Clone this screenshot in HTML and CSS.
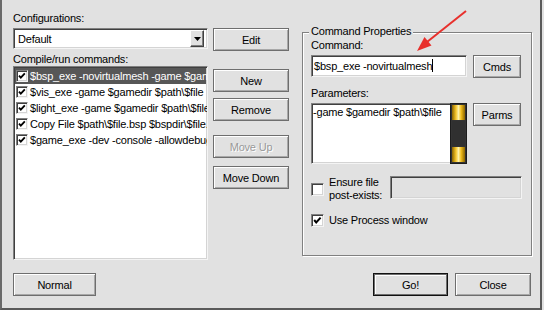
FILE: index.html
```html
<!DOCTYPE html>
<html lang="en">
<head>
    <meta charset="UTF-8">
    <title>Run Map</title>
    <link rel="stylesheet" href="styles.css">
</head>
<body>
    <div class="window">
        <div class="main">
            <div class="left">
                <div class="label">Configurations:</div>
                <div class="combo">
                    <span class="combo-text">Default</span>
                    <span class="combo-btn">
                        <svg width="7" height="4" viewBox="0 0 7 4"><polygon points="0,0 7,0 3.5,4" fill="#000"/></svg>
                    </span>
                </div>
                <div class="label label-list">Compile/run commands:</div>
                <ul class="list">
                    <li class="item selected"><span class="check sm on"></span>$bsp_exe -novirtualmesh -game $gamedir $path\$file</li>
                    <li class="item"><span class="check sm on"></span>$vis_exe -game $gamedir $path\$file</li>
                    <li class="item"><span class="check sm on"></span>$light_exe -game $gamedir $path\$file</li>
                    <li class="item"><span class="check sm on"></span>Copy File $path\$file.bsp $bspdir\$file.bsp</li>
                    <li class="item"><span class="check sm on"></span>$game_exe -dev -console -allowdebug</li>
                </ul>
            </div>

            <div class="buttons">
                <button class="btn">Edit</button>
                <button class="btn btn-new">New</button>
                <button class="btn btn-remove">Remove</button>
                <button class="btn btn-up" disabled>Move Up</button>
                <button class="btn btn-down">Move Down</button>
            </div>

            <div class="group">
                <span class="legend">Command Properties</span>
                <div class="label">Command:</div>
                <div class="field-row">
                    <div class="input">$bsp_exe -novirtualmesh<span class="caret"></span></div>
                    <button class="btn btn-small">Cmds</button>
                </div>
                <div class="label label-params">Parameters:</div>
                <div class="field-row">
                    <div class="textarea">
                        <div class="textarea-text">-game $gamedir $path\$file</div>
                        <div class="scroll">
                            <div class="thumb"></div>
                            <div class="track"></div>
                            <div class="thumb"></div>
                        </div>
                    </div>
                    <button class="btn btn-small">Parms</button>
                </div>
                <div class="check-row">
                    <span class="check"></span>
                    <div class="check-label">Ensure file<br>post-exists:</div>
                    <div class="input input-disabled"></div>
                </div>
                <div class="option-row">
                    <span class="check on"></span>
                    <div class="check-label">Use Process window</div>
                </div>
            </div>
        </div>

        <div class="footer">
            <button class="btn btn-normal">Normal</button>
            <button class="btn btn-go">Go!</button>
            <button class="btn btn-close">Close</button>
        </div>

        <svg class="arrow" width="544" height="310" viewBox="0 0 544 310">
            <line x1="466" y1="11" x2="427" y2="42" stroke="#e8302c" stroke-width="2"/>
            <polygon points="417,51 431.5,45.5 424.5,37" fill="#e8302c"/>
        </svg>
    </div>
</body>
</html>
```

FILE: styles.css
```css
body {
    margin: 0;
    background-color: #e1e1e1;
    font-family: "Liberation Sans", Arial, sans-serif;
    font-size: 11px;
    letter-spacing: -0.2px;
    color: #000;
}
.window {
    position: relative;
    width: 542px;
    height: 310px;
    box-sizing: border-box;
    border-left: 2px solid #6a6a6a;
    border-right: 2px solid #5a5a5a;
    border-bottom: 2px solid #5a5a5a;
    padding: 12px 8px 0 11px;
    display: flex;
    flex-direction: column;
}
.main {
    display: flex;
    align-items: flex-start;
}
.left {
    width: 195px;
}
.label {
    height: 13px;
    line-height: 13px;
    white-space: nowrap;
}
.label-list {
    margin-top: 4px;
}
.label-params {
    margin-top: 9px;
}

/* sunken boxes */
.combo,
.list,
.input,
.textarea {
    box-sizing: border-box;
    background-color: #fff;
    border: 1px solid;
    border-color: #808080 #f4f4f4 #f4f4f4 #808080;
    box-shadow: inset 1px 1px #404040, inset -1px -1px #d4d4d4;
}
.combo {
    margin-top: 3px;
    height: 21px;
    display: flex;
    align-items: center;
    padding: 1px;
}
.combo-text {
    flex: 1;
    padding-left: 3px;
}
.combo-btn {
    width: 14px;
    height: 17px;
    margin-right: 2px;
    box-sizing: border-box;
    background-color: #e1e1e1;
    border: 1px solid;
    border-color: #fff #404040 #404040 #fff;
    box-shadow: inset -1px -1px #808080;
    display: flex;
    align-items: center;
    justify-content: center;
}
.list {
    height: 194px;
    margin: 0;
    padding: 1px;
    list-style: none;
    overflow: hidden;
}
.item {
    height: 16px;
    display: flex;
    align-items: center;
    padding-left: 1px;
    white-space: nowrap;
}
.item.selected {
    background-color: #575757;
    color: #fff;
}

/* checkboxes */
.check {
    flex: none;
    width: 13px;
    height: 13px;
    box-sizing: border-box;
    background-color: #fff;
    border: 1px solid;
    border-color: #808080 #f4f4f4 #f4f4f4 #808080;
    box-shadow: inset 1px 1px #404040, inset -1px -1px #d4d4d4;
}
.check.sm {
    width: 12px;
    height: 12px;
    margin-right: 2px;
}
.check.on {
    background-image: url("data:image/svg+xml;utf8,<svg xmlns='http://www.w3.org/2000/svg' viewBox='0 0 11 11'><polyline points='2.2,5 4.2,7.4 8.6,2.6' fill='none' stroke='black' stroke-width='2'/></svg>");
    background-size: 100% 100%;
}

/* buttons */
.btn {
    width: 76px;
    height: 23px;
    padding: 0;
    font-family: inherit;
    font-size: 11px;
    letter-spacing: -0.2px;
    color: #000;
    background-color: #e1e1e1;
    border: 1px solid #6e6e6e;
    box-shadow: inset 1px 1px #fff, inset -1px -1px #a8a8a8;
}
.btn:disabled {
    color: #9a9a9a;
    text-shadow: 1px 1px #fff;
}
.buttons {
    width: 76px;
    margin-left: 5px;
    padding-top: 16px;
    display: flex;
    flex-direction: column;
}
.btn-new {
    margin-top: 18px;
}
.btn-remove {
    margin-top: 6px;
}
.btn-up {
    margin-top: 14px;
}
.btn-down {
    margin-top: 8px;
}
.btn-small {
    width: 48px;
}

/* command properties */
.group {
    position: relative;
    width: 230px;
    height: 224px;
    margin-left: 13px;
    margin-top: 20px;
    box-sizing: border-box;
    border: 1px solid #808080;
    box-shadow: inset 1px 1px #fff, 1px 1px #fff;
    padding: 6px 0 0 8px;
}
.legend {
    position: absolute;
    top: -8px;
    left: 6px;
    padding: 0 2px;
    line-height: 13px;
    background-color: #e1e1e1;
}
.field-row {
    display: flex;
    gap: 6px;
    margin-top: 3px;
    align-items: flex-start;
}
.input {
    width: 156px;
    height: 22px;
    line-height: 20px;
    padding-left: 2px;
    white-space: nowrap;
}
.caret {
    display: inline-block;
    width: 1px;
    height: 13px;
    background-color: #000;
    vertical-align: -2px;
}
.textarea {
    width: 156px;
    height: 61px;
    display: flex;
}
.textarea-text {
    flex: 1;
    padding: 2px 1px;
    line-height: 13px;
    white-space: nowrap;
    overflow: hidden;
}
.scroll {
    width: 17px;
    margin: -1px -1px -1px 0;
    box-sizing: border-box;
    background-color: #333;
    border: 1px solid #1c1c1c;
    padding: 1px;
    display: flex;
    flex-direction: column;
}
.thumb {
    height: 15px;
    background: linear-gradient(to right, #8a6400, #f5c52a 30%, #fff2a8 50%, #f1bd1c 70%, #8a6400);
}
.track {
    flex: 1;
    background-color: #303030;
    margin: 1px 0;
}
.check-row {
    display: flex;
    align-items: flex-start;
    margin-top: 12px;
}
.check-row .check {
    margin-top: 7px;
}
.check-label {
    margin-left: 5px;
    line-height: 13px;
    white-space: nowrap;
}
.check-row .check-label {
    width: 54px;
}
.input-disabled {
    width: 132px;
    height: 23px;
    margin-left: 7px;
    background-color: #e1e1e1;
}
.option-row {
    display: flex;
    align-items: center;
    margin-top: 12px;
}

/* footer */
.footer {
    display: flex;
    margin-top: 13px;
}
.btn-normal {
    width: 83px;
}
.btn-go {
    width: 75px;
    margin-left: auto;
    border-color: #111;
    box-shadow: inset 0 0 0 1px #6e6e6e, inset 2px 2px #fff;
}
.btn-close {
    margin-left: 7px;
    margin-right: 1px;
}
.arrow {
    position: absolute;
    top: 0;
    left: -2px;
    pointer-events: none;
}
```
